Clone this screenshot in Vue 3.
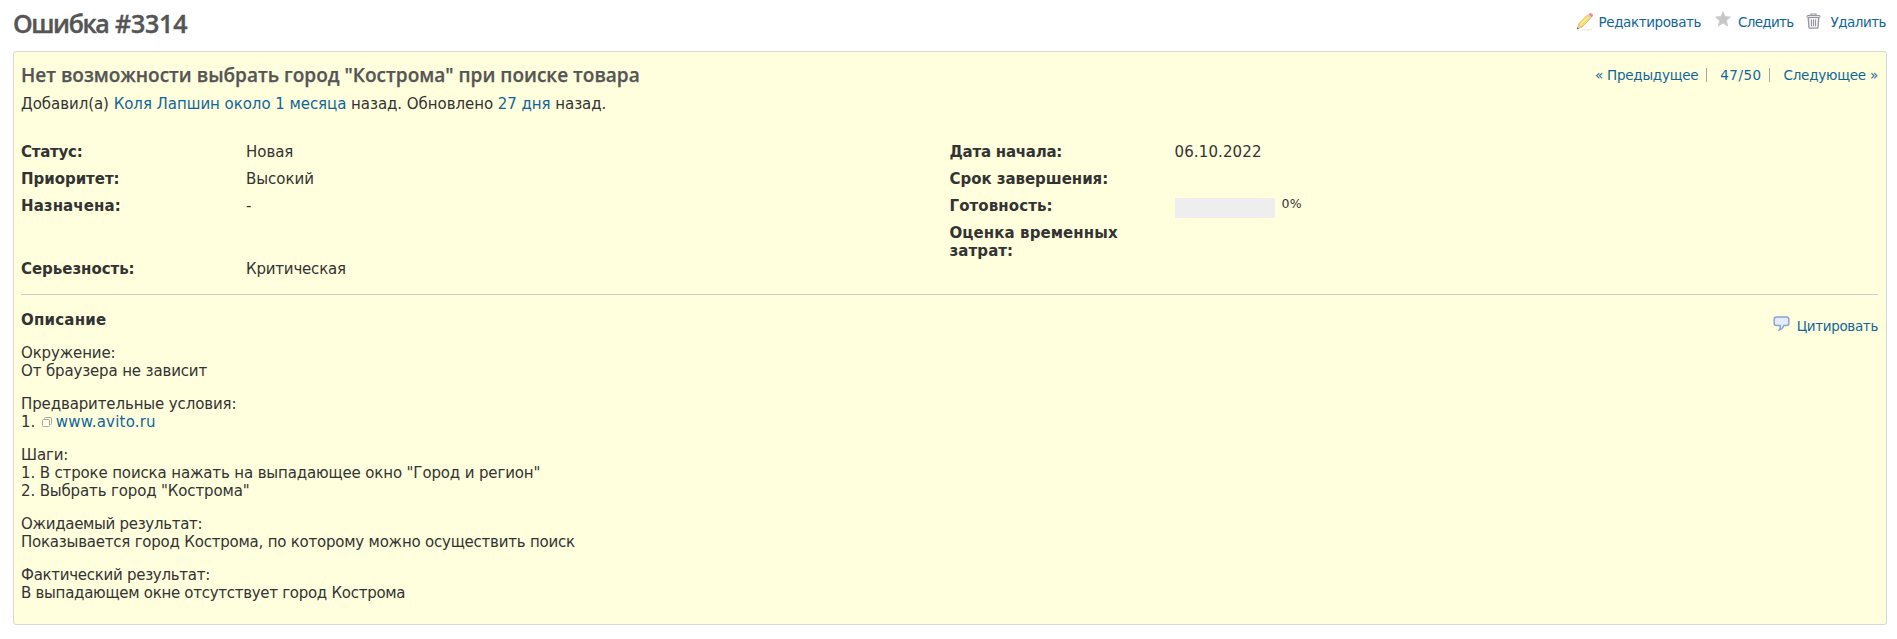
<script setup>
const leftAttributes = [
  { label: 'Статус:', value: 'Новая', cls: 'tight' },
  { label: 'Приоритет:', value: 'Высокий', cls: '' },
  { label: 'Назначена:', value: '-', cls: 'wide' },
  { label: 'Серьезность:', value: 'Критическая', cls: 'last' },
]
</script>

<template>
  <main class="content">
    <header class="top">
      <h2>Ошибка <span>#3314</span></h2>
      <div class="contextual">
        <a class="edit">
          <svg width="18" height="19" viewBox="0 0 18 19">
            <path d="M6 17.800h10" stroke="#ededed" stroke-width="1.600" />
            <path d="M1 17.200l1.500-5.100 3.300 3.200z" fill="#efd9ae" stroke="#d8b783" stroke-width=".6" />
            <path d="M1 17.200l.6-1.900 1.300 1.300z" fill="#555" />
            <path d="M2.500 12.100L11.200 3.200l3.300 3.200-8.700 8.900z" fill="#f9dc6a" stroke="#d9ac45" stroke-width=".7" />
            <path d="M4 13.100l8.400-8.500" stroke="#fff0a6" stroke-width="1.200" />
            <path d="M11.200 3.200l1-1 3.300 3.200-1 1z" fill="#d5d9df" />
            <path d="M12.200 2.200C13.500.4 17.600 1 16.900 3.800q-.4 1-1.400 1.600z" fill="#f08a85" />
          </svg>
          <span>Редактировать</span>
        </a>
        <a class="watch">
          <svg width="16" height="16" viewBox="0 0 16 16">
            <path d="M8 .9l2.100 4.700 5.100.500-3.800 3.500 1.100 5.100L8 12.100l-4.500 2.600 1.100-5.100L.8 6.100l5.100-.5z" fill="#c6c6c6" stroke="#d0d0d0" stroke-width="1.100" stroke-linejoin="round" />
          </svg>
          <span>Следить</span>
        </a>
        <a class="delete">
          <svg width="15" height="16" viewBox="0 0 15 16" fill="none" stroke="#96969e">
            <path d="M5 2.500V1h5v1.500" stroke-width="1.100" />
            <rect x=".9" y="2.500" width="13.200" height="2" rx=".6" fill="#e5e5e8" stroke-width="1" />
            <path d="M2.300 5l.6 9.200q.1 1 1 1h7.200q.9 0 1-1L12.700 5" fill="#f0f0f2" stroke-width="1.300" />
            <path d="M5.500 6.500v6.700M7.500 6.500v6.700M9.500 6.500v6.700" stroke-width="1" />
          </svg>
          <span>Удалить</span>
        </a>
      </div>
    </header>

    <section class="issue">
      <div class="heading">
        <h3>Нет возможности выбрать город "Кострома" при поиске товара</h3>
        <nav class="pager">
          <a class="prev">« Предыдущее</a><i></i><a class="pos">47/50</a><i></i><a class="next">Следующее »</a>
        </nav>
      </div>
      <p class="author">Добавил(а) <a>Коля Лапшин</a> <a>около 1 месяца</a> назад. Обновлено <a>27 дня</a> назад.</p>

      <div class="attributes">
        <dl>
          <div v-for="a in leftAttributes" :key="a.label" class="row" :class="a.cls">
            <dt>{{ a.label }}</dt><dd>{{ a.value }}</dd>
          </div>
        </dl>
        <dl>
          <div class="row tight"><dt>Дата начала:</dt><dd class="date">06.10.2022</dd></div>
          <div class="row"><dt>Срок завершения:</dt><dd></dd></div>
          <div class="row wide"><dt>Готовность:</dt><dd class="progress"><b class="bar"></b><span>0%</span></dd></div>
          <div class="row wide"><dt>Оценка временных затрат:</dt><dd></dd></div>
        </dl>
      </div>

      <hr />

      <div class="description">
        <div class="title">
          <strong>Описание</strong>
          <a class="quote">
            <svg width="17" height="15" viewBox="0 0 17 15">
              <path d="M3.500 1h10q2.300 0 2.300 2.300v4q0 2.300-2.300 2.300h-2.700Q10 12.500 6.300 14q1.300-2 .9-4.400H3.500Q1.200 9.600 1.200 7.300v-4Q1.200 1 3.500 1z" fill="#e3edfb" stroke="#8ba6cd" stroke-width="1.500" />
            </svg>
            <span>Цитировать</span>
          </a>
        </div>
        <p class="env">Окружение:<br />От браузера не зависит</p>
        <p class="pre">Предварительные условия:<br />1. <a class="external"><svg width="12" height="12" viewBox="0 0 12 12" fill="#ffffea" stroke="#a6ab9a"><rect x="3.500" y="1.500" width="7" height="7" rx="1" /><rect x="1.500" y="3.500" width="7" height="7" rx="1" /></svg>www.avito.ru</a></p>
        <p class="steps">Шаги:<br />1. В строке поиска нажать на выпадающее окно "Город и регион"<br />2. Выбрать город "Кострома"</p>
        <p><span class="narrow">Ожидаемый результат:</span><br />Показывается город Кострома, по которому можно осуществить поиск</p>
        <p class="actual">Фактический результат:<br />В выпадающем окне отсутствует город Кострома</p>
      </div>
    </section>
  </main>
</template>

<style>
body { margin: 0; background: #fff; }
</style>

<style scoped>
* { box-sizing: border-box; }
.content {
  height: 639px;
  padding: 0 10px 0 13px;
  overflow: hidden;
  color: #333;
  font: 15px/18px "DejaVu Sans", Verdana, sans-serif;
}
a { color: #169; text-decoration: none; }
h2, h3, p, dl, dd, dt { margin: 0; }
svg { display: block; flex: none; }
.top { display: flex; justify-content: space-between; height: 51px; }
h2 { padding-top: 6px; color: #555; font: 600 25px/34px "Open Sans", sans-serif; letter-spacing: -1.400px; word-spacing: 1.500px; -webkit-text-stroke: .4px #555; }
h2 span { letter-spacing: -.2px; }
.contextual { display: flex; height: 19px; margin: 12px 1px 0 0; font-size: 13.500px; }
.contextual a { display: flex; }
.contextual span { padding-top: 1px; }
.edit span { margin-left: 5px; letter-spacing: -.4px; }
.watch { margin-left: 14px; }
.watch svg { margin-top: -1px; }
.watch span { margin-left: 7px; letter-spacing: -.7px; }
.delete { margin-left: 13px; }
.delete svg { margin-top: 1px; }
.delete span { margin-left: 9px; letter-spacing: -.500px; }
.issue {
  height: 574px;
  padding: 11px 8px 0 7px;
  border: 1px solid #d7d7d7;
  border-radius: 3px;
  background: #ffffdd;
}
.heading { display: flex; justify-content: space-between; height: 32px; }
h3 { color: #555; font: 600 19px/24px "Open Sans", sans-serif; letter-spacing: .01px; -webkit-text-stroke: .25px #555; }
.pager { display: flex; padding-top: 3px; font-size: 13.500px; white-space: nowrap; }
.prev { letter-spacing: -.24px; }
.pos { letter-spacing: .45px; }
.next { letter-spacing: -.22px; }
.pager i { width: 1px; height: 14px; margin: 2px 13px 0 8px; background: #a9a998; }
.author { height: 48px; letter-spacing: -.05px; }
.attributes { display: grid; grid-template-columns: 1fr 1fr; height: 151px; }
.row { display: grid; grid-template-columns: 225px 1fr; margin-bottom: 9px; }
.row.last { margin-top: 45px; }
dt { width: 190px; font-weight: 700; letter-spacing: -.04px; }
.tight dt { letter-spacing: -.25px; }
.wide dt { letter-spacing: .09px; }
dd { letter-spacing: -.04px; }
.last dd { letter-spacing: -.2px; }
.date { letter-spacing: .12px; }
.progress { display: flex; height: 18px; }
.bar { width: 100px; height: 20px; margin-top: 1px; background: #eee; }
.progress span { margin-left: 7px; font-size: 12.500px; line-height: 14px; letter-spacing: .4px; }
hr { height: 1px; margin: 0; border: 0; background: #ccc; }
.description { padding-top: 16px; letter-spacing: -.22px; }
.title { display: flex; justify-content: space-between; height: 18px; }
.title strong { letter-spacing: .2px; }
.quote { display: flex; padding-top: 6px; font-size: 13.500px; letter-spacing: -.34px; }
.quote svg { margin-top: -1px; }
.quote span { margin-left: 7px; }
.description p { margin-top: 15px; }
.env { letter-spacing: -.14px; }
.pre { letter-spacing: -.12px; }
.steps { letter-spacing: -.14px; }
.narrow { letter-spacing: -.3px; }
.actual { letter-spacing: -.28px; }
.external { letter-spacing: .2px; }
.external svg { display: inline-block; margin: 0 3px 0 1px; vertical-align: -1px; }
</style>
